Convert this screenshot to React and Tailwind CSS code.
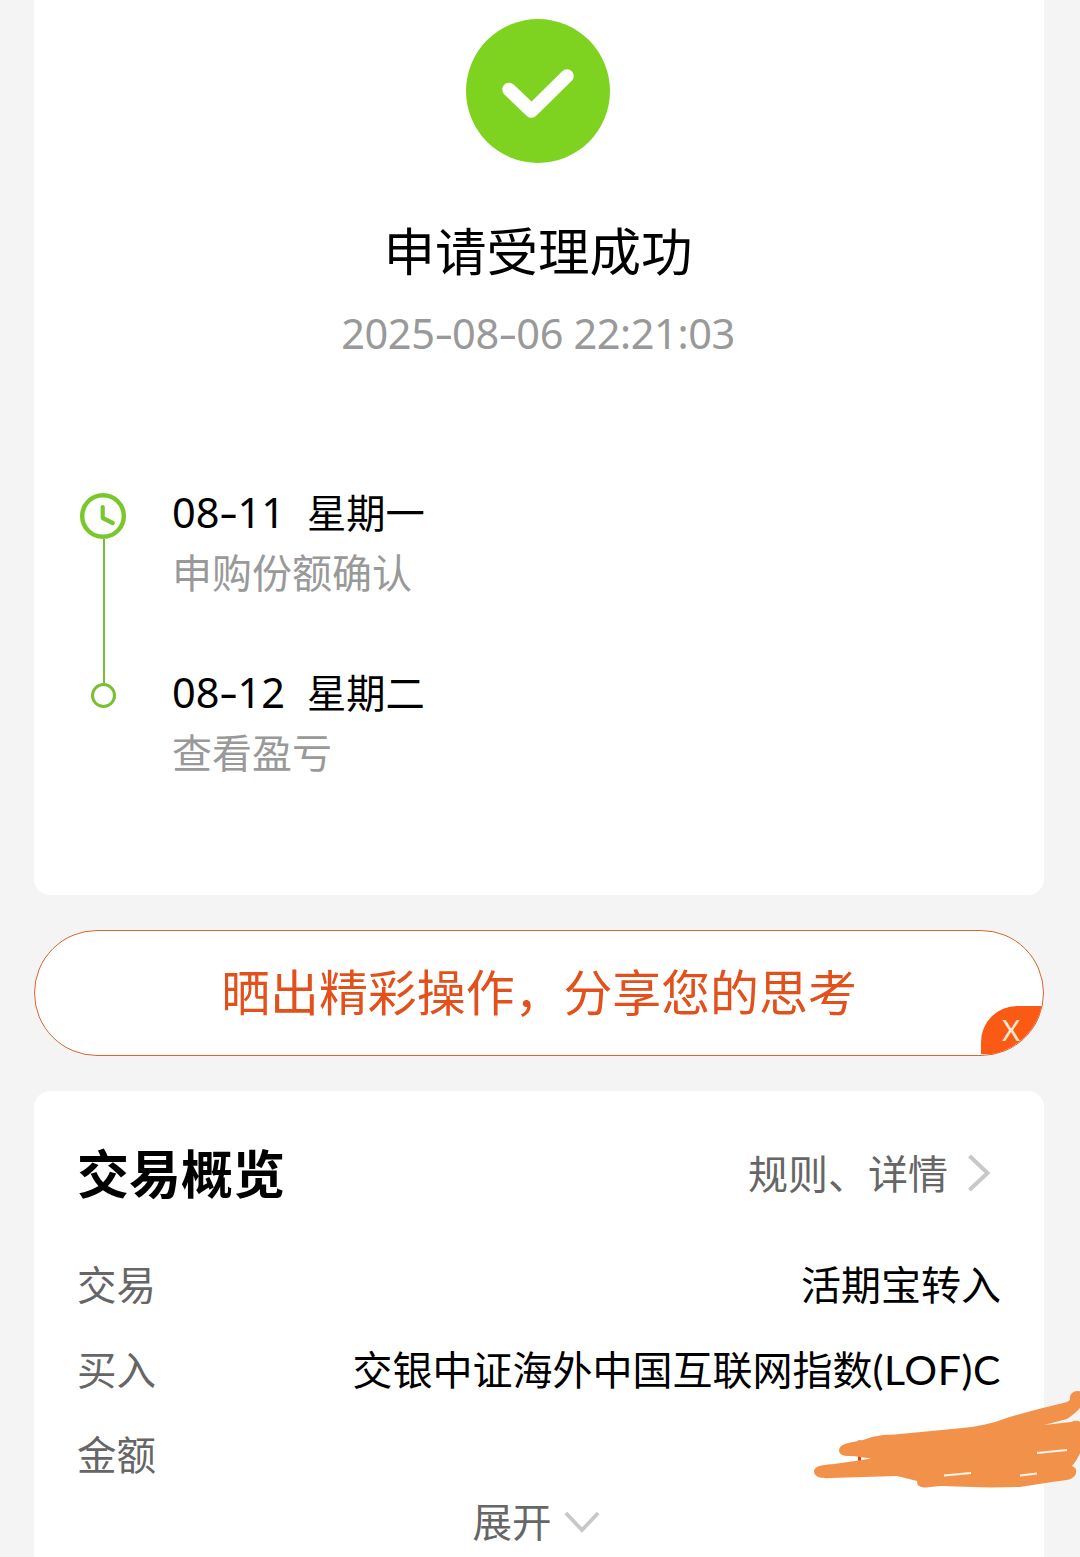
const steps = [
  { date: "08-11", day: "星期一", text: "申购份额确认" },
  { date: "08-12", day: "星期二", text: "查看盈亏" },
];

function SuccessIcon() {
  return (
    <svg className="h-36 w-36" viewBox="0 0 144 144" fill="none">
      <circle cx="72" cy="72" r="72" fill="#7ed321" />
      <path d="M43 70.5 65.5 92 101 57" stroke="#fff" strokeWidth="13.5" strokeLinecap="round" strokeLinejoin="round" />
    </svg>
  );
}

function ClockIcon() {
  return (
    <svg className="h-[46px] w-[46px] shrink-0" viewBox="0 0 46 46" fill="none" stroke="#78c72b">
      <circle cx="23" cy="23" r="20.8" strokeWidth="4.4" />
      <path d="M22.7 14V25l10 5" strokeWidth="4.2" strokeLinecap="round" strokeLinejoin="round" />
    </svg>
  );
}

function Chevron({ className }) {
  return (
    <svg className={className} viewBox="0 0 24 40" fill="none" stroke="#c8c8c8" strokeWidth="4">
      <path d="M2.5 3 20.5 20 2.5 37" />
    </svg>
  );
}

// Digits with wide dashes between the date parts
function DateText({ value }) {
  return value.split("-").map((part, i) => (
    <span key={i}>
      {i > 0 && <span className="mx-[2.3px] inline-block scale-x-[1.4]">-</span>}
      {part}
    </span>
  ));
}

// Hand-drawn marker that hides the amount
function Scribble() {
  return (
    <svg className="absolute -right-9 -top-[24px] h-[104px] w-[270px]" viewBox="810 1386 270 104">
      <path d="M859.5 1440.500V1462" stroke="#d9480f" strokeWidth="3" />
      <path
        fill="#f2924a"
        d="M1080 1391.500C1075 1390 1070 1393 1070 1398C1070 1401 1068 1402 1063 1403C1043 1408 1020 1413 995 1422C980 1426 966 1428 952 1429L895 1434.500L883 1435L872 1437L863 1440L856 1441.500C848 1443 840 1444 839 1450C839 1456 845 1456 853 1456L871 1458.500L862 1460L834 1464C824 1465 814 1465 814 1472C815 1478 823 1478.500 831 1478L897 1476L917 1481C917 1486 920 1487.500 926 1487.500L940 1486L990 1487.500L1020 1487L1052 1482L1067 1480C1073 1479 1077 1475 1076 1470C1076 1468 1074 1467 1072 1466C1076 1462 1078 1457 1080 1453V1422C1078 1420 1074 1421 1071 1422L1044 1425L1067 1419C1073 1415 1077 1411 1080 1408Z"
      />
      <path d="M1037 1453 1067 1450M944 1475.500 971 1473M1020 1475.500 1037 1473.500" stroke="#fff5ea" strokeWidth="1.8" />
    </svg>
  );
}

function Row({ label, children }) {
  return (
    <div className="relative flex h-[85px] items-center justify-between pl-[43px] pr-[43px] text-[40px]">
      <span className="text-[39.5px] text-[#666]">{label}</span>
      {children}
    </div>
  );
}

export default function App() {
  return (
    <div className="flex h-[1557px] flex-col overflow-hidden bg-[#f4f4f4] pl-[34px] pr-9 font-['Noto_Sans_CJK_SC',sans-serif] text-black">
      <section className="flex h-[895px] shrink-0 flex-col rounded-b-2xl bg-white pt-[19px]">
        <div className="flex flex-col items-center pr-[2px]">
          <SuccessIcon />
          <h1 className="mt-[50px] text-[51.5px] leading-[72px]">申请受理成功</h1>
          <p className="mt-[13px] whitespace-nowrap font-['Noto_Sans',sans-serif] text-[41.5px] leading-[70px] tracking-[-0.4px] text-[#999]">
            <DateText value="2025-08-06 22:21:03" />
          </p>
        </div>
        <div className="mt-[125px] flex pl-[46px]">
          <div className="flex w-[46px] flex-col items-center">
            <ClockIcon />
            <div className="ml-[2px] h-[144px] w-[2px] bg-[#78bd38]" />
            <div className="ml-px h-[25px] w-[25px] rounded-full border-[3px] border-[#78c02f]" />
          </div>
          <div className="-mt-[12px] ml-[46px]">
            {steps.map((step) => (
              <div key={step.date} className="h-[180px]">
                <div className="flex h-[60px] items-center text-[39.3px] leading-[60px]">
                  <span className="w-[135px] whitespace-nowrap pt-[2px] font-['Noto_Sans',sans-serif] text-[41.5px]">
                    <DateText value={step.date} />
                  </span>
                  <span>{step.day}</span>
                </div>
                <div className="text-[40px] leading-[60px] text-[#999]">{step.text}</div>
              </div>
            ))}
          </div>
        </div>
      </section>

      <div className="relative mt-[35px] flex h-[126px] shrink-0 items-center justify-center overflow-hidden rounded-full border-[1.5px] border-[#dc6330] bg-white">
        <span className="pb-[6px] text-[48.9px] leading-none text-[#e2501b]">晒出精彩操作，分享您的思考</span>
        <button className="absolute bottom-[1px] right-0 h-[48px] w-[62px] rounded-tl-[36px] bg-[#fa5a14] pr-[2px] font-['Lato',sans-serif] text-[28px] leading-[48px] text-[#ffe9d2]">X</button>
      </div>

      <section className="mt-[35px] flex h-[480px] shrink-0 flex-col rounded-t-2xl bg-white pt-[42px]">
        <div className="flex h-20 items-center justify-between pl-[43px] pr-[53px]">
          <h2 className="pb-[2px] text-[52px] font-bold leading-none">交易概览</h2>
          <div className="flex items-center gap-[19px] text-[40px] leading-none text-[#666]">
            <span className="pb-[2px]">规则、详情</span>
            <Chevron className="h-10 w-6" />
          </div>
        </div>
        <div className="mt-[27px]">
          <Row label="交易">
            <span>活期宝转入</span>
          </Row>
          <Row label="买入">
            <span className="pt-1">交银中证海外中国互联网指数<span className="font-['Lato',sans-serif] text-[41px] tracking-[0.6px]">(LOF)C</span></span>
          </Row>
          <Row label="金额">
            <Scribble />
          </Row>
        </div>
        <button className="flex h-[50px] items-center justify-center gap-[12px] pr-[6px] text-[39.5px] leading-none text-[#666]">
          <span className="pb-[1px]">展开</span>
          <Chevron className="mt-1 h-[38px] w-9 rotate-90" />
        </button>
      </section>
    </div>
  );
}
